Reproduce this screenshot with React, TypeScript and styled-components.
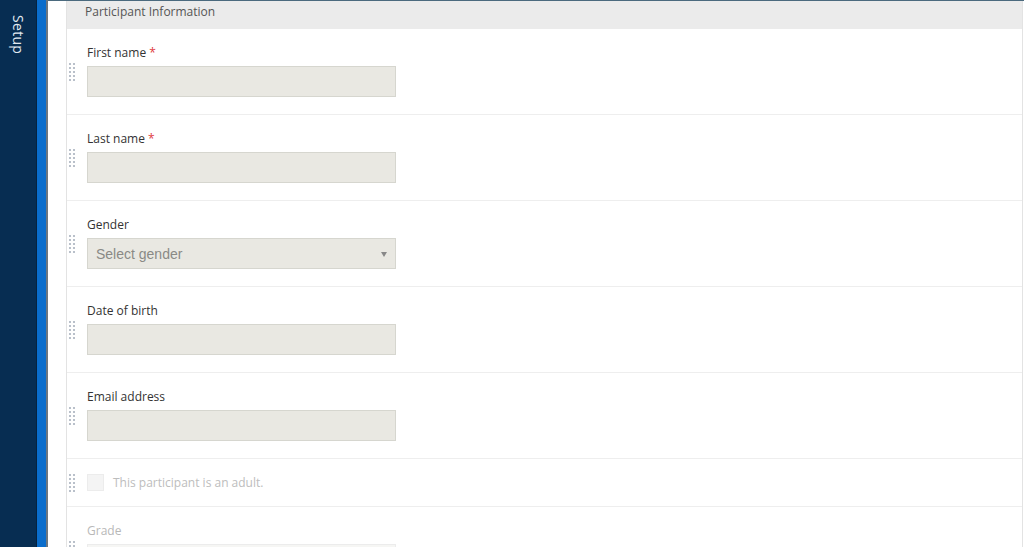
import React from "react";
import styled, { createGlobalStyle } from "styled-components";

const Global = createGlobalStyle`
  html, body { margin: 0; padding: 0; height: 100%; overflow: hidden; background: #fff; }
  body { font-family: "Open Sans", "Noto Sans", sans-serif; }
  #root { height: 100%; }
`;

const Page = styled.div`
  display: flex;
  height: 547px;
  width: 1024px;
  overflow: hidden;
`;

const Nav = styled.div`
  width: 37px;
  flex: 0 0 37px;
  background: #072d52;
  border-right: 1px solid #05223f;
  display: flex;
  justify-content: center;
  padding-top: 15px;
  box-sizing: border-box;
`;

const NavLabel = styled.span`
  writing-mode: vertical-rl;
  color: #e2e9f1;
  font-size: 14px;
  line-height: 16px;
  letter-spacing: 0.3px;
`;

const Stripe = styled.div`
  width: 9px;
  flex: 0 0 9px;
  background: #0a6dcc;
  border-right: 2px solid #6b7680;
`;

const Main = styled.div`
  flex: 1;
  border-top: 1px solid #4b6a7e;
  padding-left: 18px;
  padding-right: 1px;
  background: #fff;
  min-width: 0;
`;

const Card = styled.div`
  border-left: 1px solid #e3e3e3;
  border-right: 1px solid #e3e3e3;
`;

const Header = styled.div`
  height: 28px;
  background: #ebebeb;
  color: #555;
  font-size: 12px;
  line-height: 22px;
  padding-left: 18px;
`;

const Row = styled.div<{ $compact?: boolean; $disabled?: boolean }>`
  position: relative;
  padding: ${(p) => (p.$compact ? "15px 20px 15px 20px" : "15px 20px 17px 20px")};
  border-bottom: 1px solid #eeeeee;
  color: ${(p) => (p.$disabled ? "#b8b8b8" : "#333")};
`;

const Handle = styled.div`
  position: absolute;
  left: 2px;
  top: 50%;
  transform: translateY(-50%);
  width: 6px;
  height: 18px;
  background-image: radial-gradient(circle, #b9c0ca 0.9px, transparent 1.1px);
  background-size: 4px 4px;
  background-position: -1px -1px;
`;

const Label = styled.div`
  font-size: 12px;
  line-height: 18px;
  margin-bottom: 4px;
`;

const Req = styled.span`
  color: #e0393e;
  margin-left: 3px;
`;

const Input = styled.div`
  width: 309px;
  height: 31px;
  box-sizing: border-box;
  background: #e9e8e2;
  border: 1px solid #d6d6cf;
  display: flex;
  align-items: center;
  justify-content: space-between;
  padding: 0 8px 0 8px;
`;

const Placeholder = styled.span`
  font-family: "Liberation Sans", Arial, sans-serif;
  font-size: 14px;
  color: #8a8a86;
`;

const Caret = styled.span`
  width: 0;
  height: 0;
  border-left: 3px solid transparent;
  border-right: 3px solid transparent;
  border-top: 5px solid #888;
  margin-top: 1px;
`;

const CheckLine = styled.label`
  display: flex;
  align-items: center;
  gap: 9px;
  font-size: 12px;
  color: #bdbdbd;
`;

const Box = styled.span`
  width: 17px;
  height: 17px;
  box-sizing: border-box;
  background: #f4f4f4;
  border: 1px solid #ececec;
`;

const GhostInput = styled(Input)`
  background: #f6f6f4;
  border-color: #ececec;
`;

const fields: { label: string; req?: boolean; select?: string }[] = [
  { label: "First name", req: true },
  { label: "Last name", req: true },
  { label: "Gender", select: "Select gender" },
  { label: "Date of birth" },
  { label: "Email address" },
];

export default function App() {
  return (
    <>
      <Global />
      <Page>
        <Nav>
          <NavLabel>Setup</NavLabel>
        </Nav>
        <Stripe />
        <Main>
          <Card>
            <Header>Participant Information</Header>
            {fields.map((f) => (
              <Row key={f.label}>
                <Handle />
                <Label>
                  {f.label}
                  {f.req && <Req>*</Req>}
                </Label>
                <Input>
                  {f.select && (
                    <>
                      <Placeholder>{f.select}</Placeholder>
                      <Caret />
                    </>
                  )}
                </Input>
              </Row>
            ))}
            <Row $compact $disabled>
              <Handle />
              <CheckLine>
                <Box />
                This participant is an adult.
              </CheckLine>
            </Row>
            <Row $disabled>
              <Handle />
              <Label>Grade</Label>
              <GhostInput />
            </Row>
          </Card>
        </Main>
      </Page>
    </>
  );
}
